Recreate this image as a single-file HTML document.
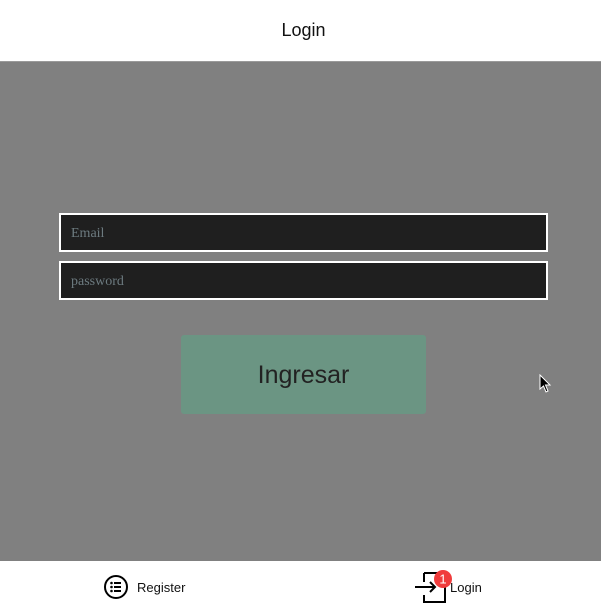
<!DOCTYPE html>
<html><head><style>
body{margin:0;width:601px;height:609px;overflow:hidden;font-family:"Liberation Sans",sans-serif;background:#808080;position:relative}
.hdr{position:absolute;left:0;top:0;width:601px;height:61px;background:#fff;border-bottom:1px solid #9a9a9a;text-align:center;line-height:60px;font-size:18px;color:#111;text-indent:6px}
.inp{position:absolute;left:59px;width:485px;height:35px;border:2px solid #fff;background:#1f1f1f;font-family:"Liberation Serif",serif;font-size:14px;color:#6d7b80;line-height:37px;padding-left:10px;box-sizing:content-box}
.btn{position:absolute;left:181px;top:335px;width:245px;height:79px;background:#6b9583;border-radius:3px;text-align:center;line-height:81px;font-size:25px;color:#222}
.ftr{position:absolute;left:0;top:561px;width:601px;height:48px;background:#fff;font-size:13px;color:#111}
</style></head><body>
<div class="hdr">Login</div>
<div class="inp" style="top:213px;width:475px">Email</div>
<div class="inp" style="top:261px;width:475px">password</div>
<div class="btn">Ingresar</div>
<svg style="position:absolute;left:539px;top:374px" width="14" height="20" viewBox="0 0 14 20"><path d="M1 1 L1 15 L4.5 12 L7 18 L9 17 L6.5 11 L11 11 Z" fill="#000" stroke="#fff" stroke-width="1"/></svg>
<div class="ftr">
<svg style="position:absolute;left:103px;top:13px" width="26" height="26" viewBox="0 0 26 26"><circle cx="13" cy="13" r="11" fill="none" stroke="#000" stroke-width="2"/><circle cx="8.5" cy="9" r="1.3"/><circle cx="8.5" cy="13" r="1.3"/><circle cx="8.5" cy="17" r="1.3"/><path d="M11 9h7M11 13h7M11 17h7" stroke="#000" stroke-width="2"/></svg>
<span style="position:absolute;left:137px;top:19px">Register</span>
<svg style="position:absolute;left:414px;top:9px" width="38" height="36" viewBox="0 0 38 36"><path d="M10 3h21v29h-21v-7M10 12v-9" fill="none" stroke="#000" stroke-width="2"/><path d="M1 17h20M16 12l5 5-5 5" fill="none" stroke="#000" stroke-width="2"/><circle cx="29" cy="9" r="9" fill="#f03c3c"/><text x="29" y="13.5" font-size="13" fill="#fff" text-anchor="middle" font-family="Liberation Sans">1</text></svg>
<span style="position:absolute;left:450px;top:19px">Login</span>
</div>
</body></html>
